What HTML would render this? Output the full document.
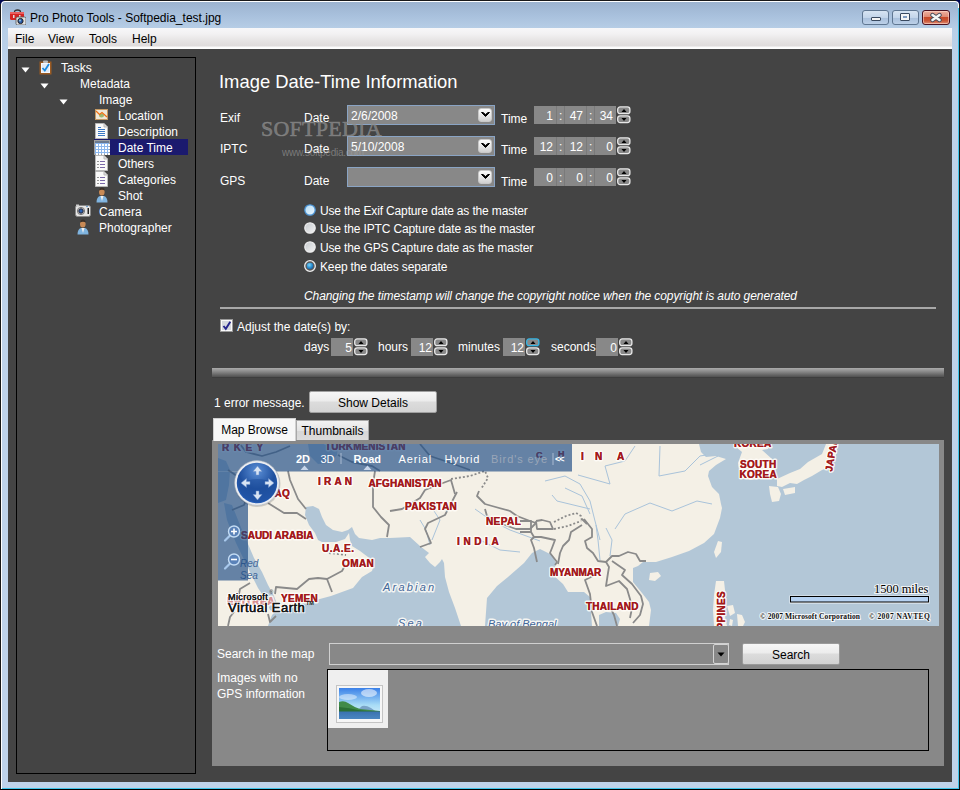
<!DOCTYPE html>
<html><head><meta charset="utf-8">
<style>
*{margin:0;padding:0;box-sizing:border-box}
html,body{width:960px;height:790px;overflow:hidden;background:#000}
body{position:relative;font-family:"Liberation Sans",sans-serif;font-size:12px;color:#fff}
.a{position:absolute}
.t{position:absolute;white-space:nowrap;font-size:12px;line-height:16px}
.k{color:#000}
</style></head><body>
<!-- window frame -->
<div class="a" style="left:0;top:0;width:960px;height:790px;background:#181818"></div><div class="a" style="left:0;top:0;width:4px;height:4px;background:#000850"></div><div class="a" style="left:956px;top:0;width:4px;height:4px;background:#000850"></div>
<div class="a" style="left:1px;top:1px;width:958px;height:788px;background:#fff;border-radius:4px 4px 0 0"></div>
<div class="a" style="left:2px;top:2px;width:956px;height:786px;background:linear-gradient(#9cb3cf 0px,#a9c1dd 14px,#b8cfe7 28px,#bdd2ea 60px,#bfd3ea 790px);border-radius:3px 3px 0 0"></div>
<div class="a" style="left:958px;top:8px;width:1px;height:781px;background:#3fc4ea"></div>
<div class="a" style="left:2px;top:788px;width:957px;height:1px;background:#3fc4ea"></div>
<div class="a" style="left:0;top:789px;width:960px;height:1px;background:#000"></div>

<!-- title -->
<svg class="a" style="left:10px;top:9px" width="16" height="16" viewBox="0 0 16 16">
<path d="M4.5 3 Q4.5 1 7.5 1 Q10.5 1 10.5 3" fill="none" stroke="#333" stroke-width="1.3"/>
<rect x="0" y="3" width="14" height="8" rx="1.5" fill="#d42424"/><rect x="0" y="3" width="14" height="2" fill="#e86060"/>
<rect x="3" y="6" width="1.5" height="3" fill="#ddd"/><rect x="9" y="6" width="1.5" height="3" fill="#ddd"/>
<rect x="6" y="8" width="10" height="8" rx="1.5" fill="#e0e0e0" stroke="#555" stroke-width="0.8"/>
<circle cx="10.5" cy="12" r="2.6" fill="#2a5aa8" stroke="#222" stroke-width="1"/><circle cx="10" cy="11.5" r="0.9" fill="#9cd"/>
</svg>
<div class="t k" style="left:30px;top:10px">Pro Photo Tools - Softpedia_test.jpg</div>

<!-- title buttons -->
<div class="a" style="left:862px;top:10px;width:27px;height:15px;border:1px solid #5f7691;border-radius:3px;background:linear-gradient(#d7e4f2 0,#c3d5ea 50%,#a8bfdb 51%,#bcd0e8 100%)"></div>
<div class="a" style="left:871px;top:17px;width:10px;height:4px;background:#f4f4f4;border:1px solid #3a4a60;border-radius:1px"></div>
<div class="a" style="left:892px;top:10px;width:27px;height:15px;border:1px solid #5f7691;border-radius:3px;background:linear-gradient(#d7e4f2 0,#c3d5ea 50%,#a8bfdb 51%,#bcd0e8 100%)"></div>
<div class="a" style="left:900px;top:13px;width:10px;height:8px;background:#f4f4f4;border:1px solid #3a4a60;border-radius:1px"></div>
<div class="a" style="left:903px;top:16px;width:4px;height:2px;background:#7f9bc0"></div>
<div class="a" style="left:922px;top:10px;width:28px;height:15px;border:1px solid #4a1020;border-radius:3px;background:linear-gradient(#eeb0a0 0,#e08a74 45%,#c84a2a 50%,#c95536 75%,#e09078 100%);box-shadow:inset 0 0 0 1px rgba(255,220,210,0.55)"></div>
<svg class="a" style="left:929px;top:11px" width="14" height="12" viewBox="0 0 14 12"><path d="M3.5 4 L10.5 9 M10.5 4 L3.5 9" stroke="#474a5a" stroke-width="4.4" stroke-linecap="round"/><path d="M3.5 4 L10.5 9 M10.5 4 L3.5 9" stroke="#f4f4f4" stroke-width="2.6" stroke-linecap="round"/></svg>

<!-- menu bar -->
<div class="a" style="left:8px;top:28px;width:944px;height:21px;background:linear-gradient(#f7f7f9 0,#f2f1f2 6px,#e7e5e5 12px,#dedbdb 18px,#fafafa 19px,#fff 21px)"></div>
<div class="t k" style="left:15px;top:31px">File</div>
<div class="t k" style="left:48px;top:31px">View</div>
<div class="t k" style="left:89px;top:31px">Tools</div>
<div class="t k" style="left:132px;top:31px">Help</div>

<!-- content -->
<div class="a" style="left:8px;top:49px;width:944px;height:733px;background:#444"></div>

<!-- tree panel -->
<div class="a" style="left:16px;top:57px;width:180px;height:717px;border:1px solid #000"></div>

<svg class="a" style="left:21px;top:67px" width="9" height="6"><path d="M0.5 0.5 H8.5 L4.5 5.5Z" fill="#fff"/></svg>
<svg class="a" style="left:39px;top:60px" width="13" height="15" viewBox="0 0 13 15"><rect x="0.5" y="1.5" width="12" height="13" fill="#9a5a22"/><rect x="2" y="3" width="9" height="10" fill="#f4f8ff"/><path d="M3 5 H10 M3 7 H10 M3 9 H10 M3 11 H10" stroke="#c8d4e4" stroke-width="0.8"/><rect x="4" y="0.5" width="5" height="2.5" rx="1" fill="#bbb"/><path d="M3.5 8 L5.8 10.5 L10 4" fill="none" stroke="#1a8ae0" stroke-width="1.8"/></svg>
<div class="t" style="left:61px;top:60px">Tasks</div>
<svg class="a" style="left:40px;top:83px" width="9" height="6"><path d="M0.5 0.5 H8.5 L4.5 5.5Z" fill="#fff"/></svg>
<div class="t" style="left:80px;top:76px">Metadata</div>
<svg class="a" style="left:59px;top:99px" width="9" height="6"><path d="M0.5 0.5 H8.5 L4.5 5.5Z" fill="#fff"/></svg>
<div class="t" style="left:99px;top:92px">Image</div>
<svg class="a" style="left:95px;top:109px" width="13" height="11" viewBox="0 0 13 11"><rect x="0.5" y="0.5" width="12" height="10" fill="#efe8d8" stroke="#c49a64"/><ellipse cx="6.5" cy="6.5" rx="2.5" ry="2" fill="#9cb870"/><path d="M1 2 L4.5 5.5 L7 3.5 L12 8" fill="none" stroke="#f07010" stroke-width="1.2"/></svg>
<div class="t" style="left:118px;top:108px">Location</div>
<svg class="a" style="left:95px;top:123px" width="13" height="16" viewBox="0 0 13 16"><path d="M0.5 0.5 H9 L12.5 4 V15.5 H0.5Z" fill="#fafafa" stroke="#b8b8b8"/><path d="M9 0.5 V4 H12.5" fill="#ddd" stroke="#bbb"/><path d="M3 4.5 H6 M3 6.5 H10 M3 8.5 H10 M3 10.5 H10 M3 12.5 H10" stroke="#3b78c4" stroke-width="1"/></svg>
<div class="t" style="left:118px;top:124px">Description</div>
<div class="a" style="left:94px;top:139px;width:94px;height:16px;background:#1b1a6e"></div>
<svg class="a" style="left:94px;top:140px" width="16" height="15" viewBox="0 0 16 15"><rect x="0" y="0" width="16" height="15" fill="#a0a0a0"/><rect x="1" y="1" width="14" height="2" fill="#6a7a90"/><rect x="1" y="3" width="14" height="11" fill="#8cb8ee"/><g fill="#fff"><rect x="2" y="4" width="2" height="2"/><rect x="5" y="4" width="2" height="2"/><rect x="8" y="4" width="2" height="2"/><rect x="11" y="4" width="2" height="2"/><rect x="14" y="4" width="2" height="2"/><rect x="2" y="7" width="2" height="2"/><rect x="5" y="7" width="2" height="2"/><rect x="8" y="7" width="2" height="2"/><rect x="11" y="7" width="2" height="2"/><rect x="14" y="7" width="2" height="2"/><rect x="2" y="10" width="2" height="2"/><rect x="5" y="10" width="2" height="2"/><rect x="8" y="10" width="2" height="2"/><rect x="11" y="10" width="2" height="2"/><rect x="14" y="10" width="2" height="2"/><rect x="2" y="13" width="2" height="2"/><rect x="5" y="13" width="2" height="2"/><rect x="8" y="13" width="2" height="2"/><rect x="11" y="13" width="2" height="2"/><rect x="14" y="13" width="2" height="2"/></g></svg>
<div class="t" style="left:118px;top:140px">Date Time</div>
<svg class="a" style="left:95px;top:155px" width="13" height="16" viewBox="0 0 13 16"><path d="M0.5 0.5 H9 L12.5 4 V15.5 H0.5Z" fill="#fafafa" stroke="#b8b8b8"/><path d="M9 0.5 V4 H12.5" fill="#ddd" stroke="#bbb"/><path d="M2.5 6.5 H3.5 M2.5 9.5 H3.5 M2.5 12.5 H3.5" stroke="#333" stroke-width="1"/><path d="M5 6.5 H10 M5 9.5 H10 M5 12.5 H10" stroke="#7a68a8" stroke-width="1"/></svg>
<div class="t" style="left:118px;top:156px">Others</div>
<svg class="a" style="left:95px;top:171px" width="13" height="16" viewBox="0 0 13 16"><path d="M0.5 0.5 H9 L12.5 4 V15.5 H0.5Z" fill="#fafafa" stroke="#b8b8b8"/><path d="M9 0.5 V4 H12.5" fill="#ddd" stroke="#bbb"/><path d="M2.5 6.5 H3.5 M2.5 9.5 H3.5 M2.5 12.5 H3.5" stroke="#333" stroke-width="1"/><path d="M5 6.5 H10 M5 9.5 H10 M5 12.5 H10" stroke="#7a68a8" stroke-width="1"/></svg>
<div class="t" style="left:118px;top:172px">Categories</div>
<svg class="a" style="left:96px;top:187px" width="12" height="16" viewBox="0 0 12 16"><path d="M0.5 15.5 Q0.5 10 4 9 H8 Q11.5 10 11.5 15.5Z" fill="#7fb4e0"/><path d="M4.5 9 L6 14 L7.5 9Z" fill="#f0f0f0"/><ellipse cx="5.8" cy="5" rx="2.8" ry="3.6" fill="#c98a55"/><path d="M3 3.5 Q3.5 0.5 6 0.5 Q8.5 0.5 8.8 3.5 Q6 2 3 3.5Z" fill="#3a3028"/></svg>
<div class="t" style="left:118px;top:188px">Shot</div>
<svg class="a" style="left:75px;top:204px" width="16" height="13" viewBox="0 0 16 13"><rect x="0.5" y="1.5" width="15" height="11" rx="2" fill="#e6e6e6" stroke="#888"/><rect x="1" y="0.5" width="3" height="2" fill="#ccc"/><circle cx="6" cy="7" r="3.6" fill="#d0d0d0" stroke="#777"/><circle cx="6" cy="7" r="2.2" fill="#2d62b0" stroke="#223"/><rect x="12.5" y="4" width="1.5" height="6" fill="#222"/><circle cx="12" cy="2.5" r="0.8" fill="#48c"/></svg>
<div class="t" style="left:99px;top:204px">Camera</div>
<svg class="a" style="left:77px;top:219px" width="12" height="16" viewBox="0 0 12 16"><path d="M0.5 15.5 Q0.5 10 4 9 H8 Q11.5 10 11.5 15.5Z" fill="#7fb4e0"/><path d="M4.5 9 L6 14 L7.5 9Z" fill="#f0f0f0"/><ellipse cx="5.8" cy="5" rx="2.8" ry="3.6" fill="#c98a55"/><path d="M3 3.5 Q3.5 0.5 6 0.5 Q8.5 0.5 8.8 3.5 Q6 2 3 3.5Z" fill="#3a3028"/></svg>
<div class="t" style="left:99px;top:220px">Photographer</div>


<!-- form -->
<!--FORM-->
<svg width="0" height="0" style="position:absolute"><defs>
<linearGradient id="rg" x1="0" y1="0" x2="1" y2="1"><stop offset="0" stop-color="#c4c8cc"/><stop offset="1" stop-color="#f4f4f4"/></linearGradient>
<radialGradient id="rgC" cx="0.4" cy="0.35" r="0.7"><stop offset="0" stop-color="#7cd4f8"/><stop offset="0.6" stop-color="#2a8ed0"/><stop offset="1" stop-color="#1a5a9a"/></radialGradient>
<linearGradient id="rgH" x1="0" y1="0" x2="1" y2="1"><stop offset="0" stop-color="#b4dcf6"/><stop offset="1" stop-color="#eef8fe"/></linearGradient>
</defs></svg>
<div class="t" style="left:219px;top:71px;font-size:18.4px;line-height:22px">Image Date-Time Information</div>
<div class="t" style="left:220px;top:110px">Exif</div>
<div class="t" style="left:304px;top:110px">Date</div>
<div class="a" style="left:347px;top:105px;width:148px;height:20px;background:#888;border:1px solid #8aa4c4"></div>
<div class="a" style="left:478px;top:108px;width:14px;height:14px;border-radius:3px;background:linear-gradient(#fdfdfd,#e4e4e4 60%,#cfcfcf);border:1px solid #c8c8c8"></div>
<svg class="a" style="left:481px;top:112px" width="9" height="6"><path d="M0.5 0.5 L4.5 4.5 L8.5 0.5 L7 0.5 L4.5 2.5 L2 0.5Z" fill="#000" stroke="#000" stroke-width="1"/></svg>
<div class="t" style="left:351px;top:108px">2/6/2008</div>
<div class="t" style="left:501px;top:111px">Time</div>
<div class="a" style="left:534px;top:106px;width:82px;height:18px;background:#888"></div>
<div class="a" style="left:556px;top:106px;width:1px;height:18px;background:#7a7a7a"></div>
<div class="a" style="left:564px;top:106px;width:1px;height:18px;background:#7a7a7a"></div>
<div class="a" style="left:586px;top:106px;width:1px;height:18px;background:#7a7a7a"></div>
<div class="a" style="left:594px;top:106px;width:1px;height:18px;background:#7a7a7a"></div>
<div class="t" style="left:534px;top:108px;width:19px;text-align:right">1</div>
<div class="t" style="left:559px;top:108px">:</div>
<div class="t" style="left:564px;top:108px;width:19px;text-align:right">47</div>
<div class="t" style="left:589px;top:108px">:</div>
<div class="t" style="left:594px;top:108px;width:19px;text-align:right">34</div>
<svg class="a" style="left:617px;top:106px" width="14" height="18" viewBox="0 0 14 18"><rect x="0.7" y="0.9" width="12.2" height="6.8" rx="2.5" fill="#888" stroke="#e8e8e8" stroke-width="1.3"/><rect x="0.7" y="9.8" width="12.2" height="6.8" rx="2.5" fill="#888" stroke="#e8e8e8" stroke-width="1.3"/><path d="M4.5 6 H9.5 L7 3Z" fill="#000"/><path d="M4.5 12 H9.5 L7 15Z" fill="#000"/></svg>
<div class="t" style="left:220px;top:141px">IPTC</div>
<div class="t" style="left:304px;top:141px">Date</div>
<div class="a" style="left:347px;top:136px;width:148px;height:20px;background:#888;border:1px solid #8aa4c4"></div>
<div class="a" style="left:478px;top:139px;width:14px;height:14px;border-radius:3px;background:linear-gradient(#fdfdfd,#e4e4e4 60%,#cfcfcf);border:1px solid #c8c8c8"></div>
<svg class="a" style="left:481px;top:143px" width="9" height="6"><path d="M0.5 0.5 L4.5 4.5 L8.5 0.5 L7 0.5 L4.5 2.5 L2 0.5Z" fill="#000" stroke="#000" stroke-width="1"/></svg>
<div class="t" style="left:351px;top:139px">5/10/2008</div>
<div class="t" style="left:501px;top:142px">Time</div>
<div class="a" style="left:534px;top:137px;width:82px;height:18px;background:#888"></div>
<div class="a" style="left:556px;top:137px;width:1px;height:18px;background:#7a7a7a"></div>
<div class="a" style="left:564px;top:137px;width:1px;height:18px;background:#7a7a7a"></div>
<div class="a" style="left:586px;top:137px;width:1px;height:18px;background:#7a7a7a"></div>
<div class="a" style="left:594px;top:137px;width:1px;height:18px;background:#7a7a7a"></div>
<div class="t" style="left:534px;top:139px;width:19px;text-align:right">12</div>
<div class="t" style="left:559px;top:139px">:</div>
<div class="t" style="left:564px;top:139px;width:19px;text-align:right">12</div>
<div class="t" style="left:589px;top:139px">:</div>
<div class="t" style="left:594px;top:139px;width:19px;text-align:right">0</div>
<svg class="a" style="left:617px;top:137px" width="14" height="18" viewBox="0 0 14 18"><rect x="0.7" y="0.9" width="12.2" height="6.8" rx="2.5" fill="#888" stroke="#e8e8e8" stroke-width="1.3"/><rect x="0.7" y="9.8" width="12.2" height="6.8" rx="2.5" fill="#888" stroke="#e8e8e8" stroke-width="1.3"/><path d="M4.5 6 H9.5 L7 3Z" fill="#000"/><path d="M4.5 12 H9.5 L7 15Z" fill="#000"/></svg>
<div class="t" style="left:220px;top:173px">GPS</div>
<div class="t" style="left:304px;top:173px">Date</div>
<div class="a" style="left:347px;top:167px;width:148px;height:20px;background:#888;border:1px solid #8aa4c4"></div>
<div class="a" style="left:478px;top:170px;width:14px;height:14px;border-radius:3px;background:linear-gradient(#fdfdfd,#e4e4e4 60%,#cfcfcf);border:1px solid #c8c8c8"></div>
<svg class="a" style="left:481px;top:174px" width="9" height="6"><path d="M0.5 0.5 L4.5 4.5 L8.5 0.5 L7 0.5 L4.5 2.5 L2 0.5Z" fill="#000" stroke="#000" stroke-width="1"/></svg>
<div class="t" style="left:351px;top:170px"></div>
<div class="t" style="left:501px;top:174px">Time</div>
<div class="a" style="left:534px;top:168px;width:82px;height:18px;background:#888"></div>
<div class="a" style="left:556px;top:168px;width:1px;height:18px;background:#7a7a7a"></div>
<div class="a" style="left:564px;top:168px;width:1px;height:18px;background:#7a7a7a"></div>
<div class="a" style="left:586px;top:168px;width:1px;height:18px;background:#7a7a7a"></div>
<div class="a" style="left:594px;top:168px;width:1px;height:18px;background:#7a7a7a"></div>
<div class="t" style="left:534px;top:170px;width:19px;text-align:right">0</div>
<div class="t" style="left:559px;top:170px">:</div>
<div class="t" style="left:564px;top:170px;width:19px;text-align:right">0</div>
<div class="t" style="left:589px;top:170px">:</div>
<div class="t" style="left:594px;top:170px;width:19px;text-align:right">0</div>
<svg class="a" style="left:617px;top:168px" width="14" height="18" viewBox="0 0 14 18"><rect x="0.7" y="0.9" width="12.2" height="6.8" rx="2.5" fill="#888" stroke="#e8e8e8" stroke-width="1.3"/><rect x="0.7" y="9.8" width="12.2" height="6.8" rx="2.5" fill="#888" stroke="#e8e8e8" stroke-width="1.3"/><path d="M4.5 6 H9.5 L7 3Z" fill="#000"/><path d="M4.5 12 H9.5 L7 15Z" fill="#000"/></svg>
<svg class="a" style="left:304px;top:204px" width="12" height="12"><circle cx="6" cy="6" r="5.2" fill="url(#rgH)" stroke="#4c94d4" stroke-width="1.3"/></svg>
<div class="t" style="left:320px;top:203px;letter-spacing:-0.15px">Use the Exif Capture date as the master</div>
<svg class="a" style="left:304px;top:222px" width="12" height="12"><circle cx="6" cy="6" r="5.2" fill="url(#rg)" stroke="#ececec" stroke-width="1.3"/></svg>
<div class="t" style="left:320px;top:221px;letter-spacing:-0.15px">Use the IPTC Capture date as the master</div>
<svg class="a" style="left:304px;top:241px" width="12" height="12"><circle cx="6" cy="6" r="5.2" fill="url(#rg)" stroke="#ececec" stroke-width="1.3"/></svg>
<div class="t" style="left:320px;top:240px;letter-spacing:-0.15px">Use the GPS Capture date as the master</div>
<svg class="a" style="left:304px;top:260px" width="12" height="12"><circle cx="6" cy="6" r="5.3" fill="#5a5a5a" stroke="#ececec" stroke-width="1.3"/><circle cx="6" cy="6" r="3.3" fill="url(#rgC)"/></svg>
<div class="t" style="left:320px;top:259px;letter-spacing:-0.15px">Keep the dates separate</div>
<div class="t" style="left:304px;top:288px;font-style:italic;letter-spacing:-0.08px">Changing the timestamp will change the copyright notice when the copyright is auto generated</div>
<div class="a" style="left:220px;top:307px;width:716px;height:2px;background:#a8a8a8"></div>
<svg class="a" style="left:220px;top:319px" width="13" height="13" viewBox="0 0 13 13"><rect x="0.5" y="0.5" width="12" height="12" fill="#fafafa" stroke="#9a9a9a"/><rect x="2" y="2" width="9" height="9" fill="#d4d8de"/><path d="M3.5 7 L5.8 9.8 L10.3 2.8" fill="none" stroke="#24248c" stroke-width="1.9"/></svg>
<div class="t" style="left:237px;top:319px">Adjust the date(s) by:</div>
<div class="t" style="left:304px;top:339px">days</div>
<div class="a" style="left:331px;top:338px;width:22px;height:18px;background:#888"></div>
<div class="t" style="left:331px;top:340px;width:21px;text-align:right">5</div>
<svg class="a" style="left:354px;top:338px" width="14" height="18" viewBox="0 0 14 18"><rect x="0.7" y="0.9" width="12.2" height="6.8" rx="2.5" fill="#888" stroke="#e8e8e8" stroke-width="1.3"/><rect x="0.7" y="9.8" width="12.2" height="6.8" rx="2.5" fill="#888" stroke="#e8e8e8" stroke-width="1.3"/><path d="M4.5 6 H9.5 L7 3Z" fill="#000"/><path d="M4.5 12 H9.5 L7 15Z" fill="#000"/></svg>
<div class="t" style="left:378px;top:339px">hours</div>
<div class="a" style="left:411px;top:338px;width:22px;height:18px;background:#888"></div>
<div class="t" style="left:411px;top:340px;width:21px;text-align:right">12</div>
<svg class="a" style="left:434px;top:338px" width="14" height="18" viewBox="0 0 14 18"><rect x="0.7" y="0.9" width="12.2" height="6.8" rx="2.5" fill="#888" stroke="#e8e8e8" stroke-width="1.3"/><rect x="0.7" y="9.8" width="12.2" height="6.8" rx="2.5" fill="#888" stroke="#e8e8e8" stroke-width="1.3"/><path d="M4.5 6 H9.5 L7 3Z" fill="#000"/><path d="M4.5 12 H9.5 L7 15Z" fill="#000"/></svg>
<div class="t" style="left:458px;top:339px">minutes</div>
<div class="a" style="left:503px;top:338px;width:22px;height:18px;background:#888"></div>
<div class="t" style="left:503px;top:340px;width:21px;text-align:right">12</div>
<svg class="a" style="left:526px;top:338px" width="14" height="18" viewBox="0 0 14 18"><rect x="0.7" y="0.9" width="12.2" height="6.8" rx="2.5" fill="#888" stroke="#35b6e6" stroke-width="1.3"/><rect x="0.7" y="9.8" width="12.2" height="6.8" rx="2.5" fill="#888" stroke="#e8e8e8" stroke-width="1.3"/><path d="M4.5 6 H9.5 L7 3Z" fill="#000"/><path d="M4.5 12 H9.5 L7 15Z" fill="#000"/></svg>
<div class="t" style="left:551px;top:339px">seconds</div>
<div class="a" style="left:596px;top:338px;width:22px;height:18px;background:#888"></div>
<div class="t" style="left:596px;top:340px;width:21px;text-align:right">0</div>
<svg class="a" style="left:619px;top:338px" width="14" height="18" viewBox="0 0 14 18"><rect x="0.7" y="0.9" width="12.2" height="6.8" rx="2.5" fill="#888" stroke="#e8e8e8" stroke-width="1.3"/><rect x="0.7" y="9.8" width="12.2" height="6.8" rx="2.5" fill="#888" stroke="#e8e8e8" stroke-width="1.3"/><path d="M4.5 6 H9.5 L7 3Z" fill="#000"/><path d="M4.5 12 H9.5 L7 15Z" fill="#000"/></svg>
<div class="a" style="left:212px;top:368px;width:732px;height:9px;background:linear-gradient(#ababab,#8e8e8e 35%,#626262 80%,#505050)"></div><div class="a" style="left:212px;top:377px;width:732px;height:1px;background:#3d3d3d"></div>
<div class="t" style="left:261px;top:116px;font-family:'Liberation Serif',serif;font-size:22px;line-height:26px;color:rgba(140,140,140,0.72);letter-spacing:0.25px;-webkit-text-stroke:0.6px rgba(140,140,140,0.72)">SOFTPEDIA</div>
<div class="t" style="left:282px;top:146px;font-size:10px;line-height:13px;color:rgba(160,160,160,0.6);letter-spacing:-0.25px">www.softpedia.com</div>
<div class="t" style="left:214px;top:395px">1 error message.</div>
<div class="a" style="left:309px;top:391px;width:128px;height:22px;border:1px solid #a0a0a0;border-radius:2px;background:linear-gradient(#f6f6f6,#ececec 45%,#dcdcdc 50%,#d4d4d4)"></div>
<div class="t k" style="left:309px;top:395px;width:128px;text-align:center">Show Details</div>
<!--/FORM-->

<!-- map -->
<!--MAP-->
<div class="a" style="left:212px;top:440px;width:732px;height:326px;background:#888"></div>
<svg class="a" style="left:218px;top:444px" width="721" height="182" viewBox="218 444 721 182">
<rect x="218" y="444" width="721" height="182" fill="#b3c7d7"/>
<polygon points="218,444 699,444 701,452 706,457 716,456 726,459 716,465 709,471 708,476 712,487 719,494 721,504 722,508 720,518 714,534 704,543 689,551 672,557 656,562 643,562 638,566 633,568 633,582 642,593 649,602 651,610 650,618 649,626 618,626 620,619 616,613 606,612 599,615 599,626 592,626 590,597 584,592 568,592 563,584 553,575 556,563 552,555 540,549 532,553 524,563 508,577 497,586 487,598 485,626 461,626 455,608 449,592 445,577 444,563 442,559 440,562 435,567 430,563 425,557 429,553 425,550 420,546 410,537 390,538 380,538 372,540 359,538 355,534 352,527 348,530 342,532 333,530 326,525 322,517 319,509 313,506 306,507 305,515 309,525 315,533 318,540 322,542 336,542 345,539 349,533 350,540 352,546 360,551 368,557 374,565 372,571 362,577 353,588 331,596 316,600 303,603 290,609 280,613 275,612 272,615 270,620 268,626 218,626" fill="#f4f0e6"/>
<polygon points="734,444 770,444 768,449 762,450 772,459 774,478 760,479 751,480 740,478 738,463 742,452 736,447" fill="#f4f0e6"/>
<polygon points="777,479 790,473 800,469 808,462 815,458 822,454 826,444 838,444 836,455 830,467 822,470 812,476 804,480 797,484 790,483 782,487 777,486" fill="#f4f0e6"/>
<polygon points="769,486 778,487 781,494 779,501 772,502 770,494" fill="#f4f0e6"/>
<polygon points="783,489 795,487 795,493 785,495" fill="#f4f0e6"/>
<polygon points="718,541 722,542 721,552 716,558 714,552" fill="#f4f0e6"/>
<polygon points="650,573 658,572 661,576 655,581 649,580" fill="#f4f0e6"/>
<polygon points="716,581 724,581 725,590 726,600 724,612 727,626 714,626 713,610 714,595" fill="#f4f0e6"/>
<polygon points="727,606 733,605 735,613 730,616" fill="#f4f0e6"/>
<polygon points="737,614 742,615 745,622 743,626 738,626" fill="#f4f0e6"/>
<polygon points="730,619 733,620 732,626 729,625" fill="#f4f0e6"/>
<polygon points="224,503 232,505 242,530 254,558 262,572 268,585 274,596 277,604 274,612 270,610 266,600 258,588 250,572 236,543 227,520" fill="#b3c7d7"/>
<polygon points="218,458 226,461 230,470 229,485 226,500 218,503" fill="#b3c7d7"/>
<polygon points="308,444 338,444 337,455 330,463 318,464 310,456" fill="#b3c7d7"/>
<polyline points="420,520 426,530 430,545" fill="none" stroke="#a9c3da" stroke-width="1"/>
<polyline points="475,509 492,521 510,530 540,541" fill="none" stroke="#a9c3da" stroke-width="1"/>
<polyline points="545,481 565,476 580,484 590,501 595,521 600,540" fill="none" stroke="#a9c3da" stroke-width="1"/>
<polyline points="565,488 582,496 590,514" fill="none" stroke="#a9c3da" stroke-width="1"/>
<polyline points="552,495 557,501 590,509" fill="none" stroke="#a9c3da" stroke-width="1"/>
<polyline points="615,529 625,514 650,503 672,511 697,501 712,504" fill="none" stroke="#a9c3da" stroke-width="1"/>
<polyline points="635,446 625,461 605,466 610,484 578,475" fill="none" stroke="#a9c3da" stroke-width="1"/>
<polyline points="660,446 659,476 685,471 700,456 706,455" fill="none" stroke="#a9c3da" stroke-width="1"/>
<polyline points="600,560 598,540 596,525" fill="none" stroke="#a9c3da" stroke-width="1"/>
<polyline points="610,556 612,540 606,528" fill="none" stroke="#a9c3da" stroke-width="1"/>
<polyline points="700,465 718,456" fill="none" stroke="#a9c3da" stroke-width="1"/>
<polyline points="480,540 500,550 520,552" fill="none" stroke="#a9c3da" stroke-width="1"/>
<polyline points="430,505 440,520 432,540" fill="none" stroke="#a9c3da" stroke-width="1"/>
<polyline points="520,521 531,521 531,532 520,532" fill="none" stroke="#8a8a8a" stroke-width="1.8" stroke-linejoin="round"/>
<polyline points="536,521 542,520 550,522 553,529 537,529 536,521" fill="none" stroke="#8a8a8a" stroke-width="1.8" stroke-linejoin="round"/>
<polyline points="584,519 592,529 592,537 585,541 587,548 593,553 598,561 606,562 612,556 619,556 628,552 636,554 640,561 646,561" fill="none" stroke="#8a8a8a" stroke-width="1.8" stroke-linejoin="round"/>
<polyline points="582,525 571,532 569,540 563,546 560,553 558,564" fill="none" stroke="#8a8a8a" stroke-width="1.8" stroke-linejoin="round"/>
<polyline points="531,532 534,537 541,537 555,540 552,548 550,553 557,562 555,565" fill="none" stroke="#8a8a8a" stroke-width="1.8" stroke-linejoin="round"/>
<polyline points="534,537 531,540 534,548 537,562" fill="none" stroke="#8a8a8a" stroke-width="1.8" stroke-linejoin="round"/>
<polyline points="595,575 585,580 590,594 592,612 597,626" fill="none" stroke="#8a8a8a" stroke-width="1.8" stroke-linejoin="round"/>
<polyline points="606,562 609,567 608,573 606,586 619,581 627,589 630,599 632,608 630,618" fill="none" stroke="#8a8a8a" stroke-width="1.8" stroke-linejoin="round"/>
<polyline points="612,561 625,570 622,575 632,584 641,596 643,604 640,615 633,623" fill="none" stroke="#8a8a8a" stroke-width="1.8" stroke-linejoin="round"/>
<polyline points="609,605 614,615 617,626" fill="none" stroke="#8a8a8a" stroke-width="1.8" stroke-linejoin="round"/>
<polyline points="240,444 246,452 262,456 276,452 290,446" fill="none" stroke="#8a8a8a" stroke-width="1.8" stroke-linejoin="round"/>
<polyline points="228,470 240,478 250,490 244,505 232,510" fill="none" stroke="#8a8a8a" stroke-width="1.8" stroke-linejoin="round"/>
<polyline points="338,455 352,462 372,466 380,471" fill="none" stroke="#8a8a8a" stroke-width="1.8" stroke-linejoin="round"/>
<polyline points="420,444 430,456 448,462 470,470" fill="none" stroke="#8a8a8a" stroke-width="1.8" stroke-linejoin="round"/>
<polyline points="288,471 290,480 298,499 306,509" fill="none" stroke="#8a8a8a" stroke-width="1.8" stroke-linejoin="round"/>
<polyline points="268,503 284,513 297,513 306,519" fill="none" stroke="#8a8a8a" stroke-width="1.8" stroke-linejoin="round"/>
<polyline points="275,594 276,587 297,589 309,579 318,578 327,579 342,571 346,564" fill="none" stroke="#8a8a8a" stroke-width="1.8" stroke-linejoin="round"/>
<polyline points="327,579 332,592" fill="none" stroke="#8a8a8a" stroke-width="1.8" stroke-linejoin="round"/>
<polyline points="375,471 373,484 373,507 381,517 389,525 387,537" fill="none" stroke="#8a8a8a" stroke-width="1.8" stroke-linejoin="round"/>
<polyline points="390,511 402,509 420,498 425,490 435,486 451,480 455,494" fill="none" stroke="#8a8a8a" stroke-width="1.8" stroke-linejoin="round"/>
<polyline points="457,492 445,515 428,523 425,529 431,543 420,547" fill="none" stroke="#8a8a8a" stroke-width="1.8" stroke-linejoin="round"/>
<polyline points="479,491 477,496 485,504 492,506 510,511 517,516 530,521 536,523" fill="none" stroke="#8a8a8a" stroke-width="1.8" stroke-linejoin="round"/>
<polyline points="485,509 487,516 502,524 516,529 530,529 536,523" fill="none" stroke="#8a8a8a" stroke-width="1.8" stroke-linejoin="round"/>
<polyline points="582,519 587,524" fill="none" stroke="#8a8a8a" stroke-width="1.8" stroke-linejoin="round"/>
<polyline points="250,583 240,589 239,594" fill="none" stroke="#8a8a8a" stroke-width="1.8" stroke-linejoin="round"/>
<polyline points="228,626 230,617 234,612" fill="none" stroke="#8a8a8a" stroke-width="1.8" stroke-linejoin="round"/>
<polyline points="268,614 270,622 276,616" fill="none" stroke="#8a8a8a" stroke-width="1.8" stroke-linejoin="round"/>
<polyline points="451,479 470,476 485,471 488,478 481,489" fill="none" stroke="#8a8a8a" stroke-width="1.8" stroke-dasharray="2 2"/>
<polyline points="554,522 566,516 576,513 581,516 582,521" fill="none" stroke="#8a8a8a" stroke-width="1.8" stroke-dasharray="2 2"/>
<polyline points="554,529 568,526 581,521" fill="none" stroke="#8a8a8a" stroke-width="1.8" stroke-dasharray="2 2"/>
<polyline points="329,553 346,555" fill="none" stroke="#8a8a8a" stroke-width="1.8" stroke-dasharray="2 2"/>
<text x="318" y="485" font-family="Liberation Sans" font-size="10" font-weight="bold" font-style="normal" letter-spacing="3.2" fill="#a3191c" stroke="#fffdf8" stroke-width="3" stroke-opacity="0.85" stroke-linejoin="round" paint-order="stroke">IRAN</text>
<text x="318" y="485" font-family="Liberation Sans" font-size="10" font-weight="bold" font-style="normal" letter-spacing="3.2" fill="#a3191c" stroke="#a3191c" stroke-width="0.15">IRAN</text>
<text x="368.5" y="486.5" font-family="Liberation Sans" font-size="10" font-weight="bold" font-style="normal" letter-spacing="0.1" fill="#a3191c" stroke="#fffdf8" stroke-width="3" stroke-opacity="0.85" stroke-linejoin="round" paint-order="stroke">AFGHANISTAN</text>
<text x="368.5" y="486.5" font-family="Liberation Sans" font-size="10" font-weight="bold" font-style="normal" letter-spacing="0.1" fill="#a3191c" stroke="#a3191c" stroke-width="0.15">AFGHANISTAN</text>
<text x="405" y="509.5" font-family="Liberation Sans" font-size="10" font-weight="bold" font-style="normal" letter-spacing="0.3" fill="#a3191c" stroke="#fffdf8" stroke-width="3" stroke-opacity="0.85" stroke-linejoin="round" paint-order="stroke">PAKISTAN</text>
<text x="405" y="509.5" font-family="Liberation Sans" font-size="10" font-weight="bold" font-style="normal" letter-spacing="0.3" fill="#a3191c" stroke="#a3191c" stroke-width="0.15">PAKISTAN</text>
<text x="264" y="497" font-family="Liberation Sans" font-size="10" font-weight="bold" font-style="normal" letter-spacing="0.3" fill="#a3191c" stroke="#fffdf8" stroke-width="3" stroke-opacity="0.85" stroke-linejoin="round" paint-order="stroke">IRAQ</text>
<text x="264" y="497" font-family="Liberation Sans" font-size="10" font-weight="bold" font-style="normal" letter-spacing="0.3" fill="#a3191c" stroke="#a3191c" stroke-width="0.15">IRAQ</text>
<text x="241" y="539" font-family="Liberation Sans" font-size="10" font-weight="bold" font-style="normal" letter-spacing="0.0" fill="#a3191c" stroke="#fffdf8" stroke-width="3" stroke-opacity="0.85" stroke-linejoin="round" paint-order="stroke">SAUDI ARABIA</text>
<text x="241" y="539" font-family="Liberation Sans" font-size="10" font-weight="bold" font-style="normal" letter-spacing="0.0" fill="#a3191c" stroke="#a3191c" stroke-width="0.15">SAUDI ARABIA</text>
<text x="322" y="551.5" font-family="Liberation Sans" font-size="10" font-weight="bold" font-style="normal" letter-spacing="0.5" fill="#a3191c" stroke="#fffdf8" stroke-width="3" stroke-opacity="0.85" stroke-linejoin="round" paint-order="stroke">U.A.E.</text>
<text x="322" y="551.5" font-family="Liberation Sans" font-size="10" font-weight="bold" font-style="normal" letter-spacing="0.5" fill="#a3191c" stroke="#a3191c" stroke-width="0.15">U.A.E.</text>
<text x="342" y="567" font-family="Liberation Sans" font-size="10" font-weight="bold" font-style="normal" letter-spacing="0.4" fill="#a3191c" stroke="#fffdf8" stroke-width="3" stroke-opacity="0.85" stroke-linejoin="round" paint-order="stroke">OMAN</text>
<text x="342" y="567" font-family="Liberation Sans" font-size="10" font-weight="bold" font-style="normal" letter-spacing="0.4" fill="#a3191c" stroke="#a3191c" stroke-width="0.15">OMAN</text>
<text x="281" y="601.5" font-family="Liberation Sans" font-size="10" font-weight="bold" font-style="normal" letter-spacing="0.3" fill="#a3191c" stroke="#fffdf8" stroke-width="3" stroke-opacity="0.85" stroke-linejoin="round" paint-order="stroke">YEMEN</text>
<text x="281" y="601.5" font-family="Liberation Sans" font-size="10" font-weight="bold" font-style="normal" letter-spacing="0.3" fill="#a3191c" stroke="#a3191c" stroke-width="0.15">YEMEN</text>
<text x="227" y="605" font-family="Liberation Sans" font-size="10" font-weight="bold" font-style="normal" letter-spacing="0.6" fill="#d89090" stroke="#fffdf8" stroke-width="3" stroke-opacity="0.85" stroke-linejoin="round" paint-order="stroke">ERITREA</text>
<text x="227" y="605" font-family="Liberation Sans" font-size="10" font-weight="bold" font-style="normal" letter-spacing="0.6" fill="#d89090" stroke="#d89090" stroke-width="0.15">ERITREA</text>
<text x="457" y="544.5" font-family="Liberation Sans" font-size="10" font-weight="bold" font-style="normal" letter-spacing="3.6" fill="#a3191c" stroke="#fffdf8" stroke-width="3" stroke-opacity="0.85" stroke-linejoin="round" paint-order="stroke">INDIA</text>
<text x="457" y="544.5" font-family="Liberation Sans" font-size="10" font-weight="bold" font-style="normal" letter-spacing="3.6" fill="#a3191c" stroke="#a3191c" stroke-width="0.15">INDIA</text>
<text x="486" y="524.5" font-family="Liberation Sans" font-size="10" font-weight="bold" font-style="normal" letter-spacing="0.4" fill="#a3191c" stroke="#fffdf8" stroke-width="3" stroke-opacity="0.85" stroke-linejoin="round" paint-order="stroke">NEPAL</text>
<text x="486" y="524.5" font-family="Liberation Sans" font-size="10" font-weight="bold" font-style="normal" letter-spacing="0.4" fill="#a3191c" stroke="#a3191c" stroke-width="0.15">NEPAL</text>
<text x="550" y="575.5" font-family="Liberation Sans" font-size="10" font-weight="bold" font-style="normal" letter-spacing="0.0" fill="#a3191c" stroke="#fffdf8" stroke-width="3" stroke-opacity="0.85" stroke-linejoin="round" paint-order="stroke">MYANMAR</text>
<text x="550" y="575.5" font-family="Liberation Sans" font-size="10" font-weight="bold" font-style="normal" letter-spacing="0.0" fill="#a3191c" stroke="#a3191c" stroke-width="0.15">MYANMAR</text>
<text x="586" y="609.5" font-family="Liberation Sans" font-size="10" font-weight="bold" font-style="normal" letter-spacing="0.2" fill="#a3191c" stroke="#fffdf8" stroke-width="3" stroke-opacity="0.85" stroke-linejoin="round" paint-order="stroke">THAILAND</text>
<text x="586" y="609.5" font-family="Liberation Sans" font-size="10" font-weight="bold" font-style="normal" letter-spacing="0.2" fill="#a3191c" stroke="#a3191c" stroke-width="0.15">THAILAND</text>
<text x="740" y="467.5" font-family="Liberation Sans" font-size="10" font-weight="bold" font-style="normal" letter-spacing="0.3" fill="#a3191c" stroke="#fffdf8" stroke-width="3" stroke-opacity="0.85" stroke-linejoin="round" paint-order="stroke">SOUTH</text>
<text x="740" y="467.5" font-family="Liberation Sans" font-size="10" font-weight="bold" font-style="normal" letter-spacing="0.3" fill="#a3191c" stroke="#a3191c" stroke-width="0.15">SOUTH</text>
<text x="739.5" y="478" font-family="Liberation Sans" font-size="10" font-weight="bold" font-style="normal" letter-spacing="0.3" fill="#a3191c" stroke="#fffdf8" stroke-width="3" stroke-opacity="0.85" stroke-linejoin="round" paint-order="stroke">KOREA</text>
<text x="739.5" y="478" font-family="Liberation Sans" font-size="10" font-weight="bold" font-style="normal" letter-spacing="0.3" fill="#a3191c" stroke="#a3191c" stroke-width="0.15">KOREA</text>
<text x="734" y="447" font-family="Liberation Sans" font-size="10" font-weight="bold" font-style="normal" letter-spacing="0.3" fill="#a3191c" stroke="#fffdf8" stroke-width="3" stroke-opacity="0.85" stroke-linejoin="round" paint-order="stroke">KOREA</text>
<text x="734" y="447" font-family="Liberation Sans" font-size="10" font-weight="bold" font-style="normal" letter-spacing="0.3" fill="#a3191c" stroke="#a3191c" stroke-width="0.15">KOREA</text>
<text x="581" y="460" font-family="Liberation Sans" font-size="10" font-weight="bold" font-style="normal" letter-spacing="0" fill="#a3191c" stroke="#fffdf8" stroke-width="3" stroke-opacity="0.85" stroke-linejoin="round" paint-order="stroke">I</text>
<text x="581" y="460" font-family="Liberation Sans" font-size="10" font-weight="bold" font-style="normal" letter-spacing="0" fill="#a3191c" stroke="#a3191c" stroke-width="0.15">I</text>
<text x="595" y="460" font-family="Liberation Sans" font-size="10" font-weight="bold" font-style="normal" letter-spacing="0" fill="#a3191c" stroke="#fffdf8" stroke-width="3" stroke-opacity="0.85" stroke-linejoin="round" paint-order="stroke">N</text>
<text x="595" y="460" font-family="Liberation Sans" font-size="10" font-weight="bold" font-style="normal" letter-spacing="0" fill="#a3191c" stroke="#a3191c" stroke-width="0.15">N</text>
<text x="617" y="460" font-family="Liberation Sans" font-size="10" font-weight="bold" font-style="normal" letter-spacing="0" fill="#a3191c" stroke="#fffdf8" stroke-width="3" stroke-opacity="0.85" stroke-linejoin="round" paint-order="stroke">A</text>
<text x="617" y="460" font-family="Liberation Sans" font-size="10" font-weight="bold" font-style="normal" letter-spacing="0" fill="#a3191c" stroke="#a3191c" stroke-width="0.15">A</text>
<text x="832" y="472" font-family="Liberation Sans" font-size="10" font-weight="bold" font-style="normal" letter-spacing="0.3" fill="#a3191c" stroke="#fffdf8" stroke-width="3" stroke-opacity="0.85" stroke-linejoin="round" paint-order="stroke" transform="rotate(-80 832 472)">JAPAN</text>
<text x="832" y="472" font-family="Liberation Sans" font-size="10" font-weight="bold" font-style="normal" letter-spacing="0.3" fill="#a3191c" stroke="#a3191c" stroke-width="0.15" transform="rotate(-80 832 472)">JAPAN</text>
<text x="724.5" y="656.5" font-family="Liberation Sans" font-size="10" font-weight="bold" font-style="normal" letter-spacing="0.3" fill="#a3191c" stroke="#fffdf8" stroke-width="3" stroke-opacity="0.85" stroke-linejoin="round" paint-order="stroke" transform="rotate(-90 724.5 656.5)">PHILIPPINES</text>
<text x="724.5" y="656.5" font-family="Liberation Sans" font-size="10" font-weight="bold" font-style="normal" letter-spacing="0.3" fill="#a3191c" stroke="#a3191c" stroke-width="0.15" transform="rotate(-90 724.5 656.5)">PHILIPPINES</text>
<text x="222" y="451" font-family="Liberation Sans" font-size="10" font-weight="bold" font-style="normal" letter-spacing="4.5" fill="#a3191c" stroke="#fffdf8" stroke-width="3" stroke-opacity="0.85" stroke-linejoin="round" paint-order="stroke">RKEY</text>
<text x="222" y="451" font-family="Liberation Sans" font-size="10" font-weight="bold" font-style="normal" letter-spacing="4.5" fill="#a3191c" stroke="#a3191c" stroke-width="0.15">RKEY</text>
<text x="325" y="450" font-family="Liberation Sans" font-size="10" font-weight="bold" font-style="normal" letter-spacing="0.1" fill="#a3191c" stroke="#fffdf8" stroke-width="3" stroke-opacity="0.85" stroke-linejoin="round" paint-order="stroke">TURKMENISTAN</text>
<text x="325" y="450" font-family="Liberation Sans" font-size="10" font-weight="bold" font-style="normal" letter-spacing="0.1" fill="#a3191c" stroke="#a3191c" stroke-width="0.15">TURKMENISTAN</text>
<text x="536" y="458" font-family="Liberation Sans" font-size="9" font-weight="bold" font-style="normal" letter-spacing="0" fill="#a3191c" stroke="#fffdf8" stroke-width="3" stroke-opacity="0.85" stroke-linejoin="round" paint-order="stroke">C</text>
<text x="536" y="458" font-family="Liberation Sans" font-size="9" font-weight="bold" font-style="normal" letter-spacing="0" fill="#a3191c" stroke="#a3191c" stroke-width="0.15">C</text>
<text x="558" y="457" font-family="Liberation Sans" font-size="9" font-weight="bold" font-style="normal" letter-spacing="0" fill="#a3191c" stroke="#fffdf8" stroke-width="3" stroke-opacity="0.85" stroke-linejoin="round" paint-order="stroke">H</text>
<text x="558" y="457" font-family="Liberation Sans" font-size="9" font-weight="bold" font-style="normal" letter-spacing="0" fill="#a3191c" stroke="#a3191c" stroke-width="0.15">H</text>
<text x="383" y="591" font-family="Liberation Sans" font-size="11" font-weight="normal" font-style="italic" letter-spacing="2.2" fill="#42679a" stroke="#fffdf8" stroke-width="3" stroke-opacity="0.85" stroke-linejoin="round" paint-order="stroke">Arabian</text>
<text x="398" y="627" font-family="Liberation Sans" font-size="11" font-weight="normal" font-style="italic" letter-spacing="2.2" fill="#42679a" stroke="#fffdf8" stroke-width="3" stroke-opacity="0.85" stroke-linejoin="round" paint-order="stroke">Sea</text>
<text x="488" y="628" font-family="Liberation Sans" font-size="11" font-weight="normal" font-style="italic" letter-spacing="0" fill="#42679a" stroke="#fffdf8" stroke-width="3" stroke-opacity="0.85" stroke-linejoin="round" paint-order="stroke">Bay of Bengal</text>
<text x="240" y="567" font-family="Liberation Sans" font-size="10" font-weight="normal" font-style="italic" letter-spacing="0" fill="#42679a" >Red</text>
<text x="240" y="579" font-family="Liberation Sans" font-size="10" font-weight="normal" font-style="italic" letter-spacing="0" fill="#42679a" >Sea</text>
<rect x="218" y="444" width="354" height="27.5" fill="rgb(32,78,134)" fill-opacity="0.68"/>
<rect x="218" y="471.5" width="30" height="109" fill="rgb(32,78,134)" fill-opacity="0.68"/>
<text x="296" y="463" font-family="Liberation Sans" font-size="11" font-weight="bold" fill="#fff">2D</text>
<text x="320.5" y="463" font-family="Liberation Sans" font-size="11" fill="#fff">3D</text>
<rect x="340.5" y="453" width="1" height="11" fill="#a9bad2"/>
<text x="353.5" y="463" font-family="Liberation Sans" font-size="11" font-weight="bold" fill="#fff">Road</text>
<text x="398.5" y="463" font-family="Liberation Sans" font-size="11" fill="#fff" letter-spacing="0.9">Aerial</text>
<text x="444.5" y="463" font-family="Liberation Sans" font-size="11" fill="#fff" letter-spacing="0.6">Hybrid</text>
<text x="491" y="463" font-family="Liberation Sans" font-size="11" fill="#9aa6b8" letter-spacing="0.9">Bird's eye</text>
<rect x="552.5" y="453" width="1" height="12" fill="#a9bad2"/>
<text x="555" y="462" font-family="Liberation Sans" font-size="9" font-weight="bold" fill="#fff" letter-spacing="-1">&lt;&lt;</text>
<path d="M300.5 470 L304.5 465.5 L308.5 470Z" fill="#c8d6ea"/>
<path d="M363.5 470 L367.5 465.5 L371.5 470Z" fill="#c8d6ea"/>
<defs><radialGradient id="nav" cx="0.5" cy="0.2" r="0.9"><stop offset="0" stop-color="#5b8fd6"/><stop offset="0.5" stop-color="#1f4f9e"/><stop offset="1" stop-color="#2a64c0"/></radialGradient></defs>
<circle cx="257.5" cy="484" r="23" fill="#000" fill-opacity="0.15"/>
<circle cx="257" cy="483" r="22.4" fill="#eceef2" stroke="#a8b0bc" stroke-width="0.6"/>
<circle cx="257" cy="483" r="20.2" fill="url(#nav)"/>
<path d="M239 484 Q257 474 276 484 Q276 500 257.5 502.5 Q239 500 239 484Z" fill="#1d4f9c" fill-opacity="0.55"/>
<g fill="#d8e4f4" stroke="#6a8fc8" stroke-width="0.5">
<path d="M257.5 466 L262 471.5 L259 471.5 L259 475 L256 475 L256 471.5 L253 471.5Z"/>
<path d="M257.5 500 L262 494.5 L259 494.5 L259 491 L256 491 L256 494.5 L253 494.5Z"/>
<path d="M241 483 L246.5 478.5 L246.5 481.5 L250 481.5 L250 484.5 L246.5 484.5 L246.5 487.5Z"/>
<path d="M274 483 L268.5 478.5 L268.5 481.5 L265 481.5 L265 484.5 L268.5 484.5 L268.5 487.5Z"/>
</g>
<line x1="230" y1="535.5" x2="225" y2="540.5" stroke="#a8c8ec" stroke-width="2.2" stroke-linecap="round"/><circle cx="234" cy="531.5" r="5.5" fill="#5a82b8" stroke="#c4dcf4" stroke-width="1.4"/><path d="M231 531.5 H237 M234 528.5 V534.5" stroke="#fff" stroke-width="1.6"/>
<line x1="230" y1="563.5" x2="225" y2="568.5" stroke="#a8c8ec" stroke-width="2.2" stroke-linecap="round"/><circle cx="234" cy="559.5" r="5.5" fill="#5a82b8" stroke="#c4dcf4" stroke-width="1.4"/><path d="M231 559.5 H237" stroke="#fff" stroke-width="1.6"/>
<text x="228" y="599.5" font-family="Liberation Sans" font-size="9" fill="#151515" stroke="#fff" stroke-width="2.2" stroke-opacity="0.75" paint-order="stroke" letter-spacing="0.4">Microsoft</text>
<text x="228" y="599.5" font-family="Liberation Sans" font-size="9" fill="#151515" stroke="#151515" stroke-width="0.25" letter-spacing="0.4">Microsoft</text>
<text x="269.5" y="594" font-family="Liberation Sans" font-size="5" fill="#222">®</text>
<text x="228" y="611.5" font-family="Liberation Sans" font-size="13" fill="#151515" stroke="#fff" stroke-width="2.4" stroke-opacity="0.75" paint-order="stroke" letter-spacing="0.45">Virtual Earth</text>
<text x="228" y="611.5" font-family="Liberation Sans" font-size="13" fill="#151515" stroke="#151515" stroke-width="0.35" letter-spacing="0.45">Virtual Earth</text>
<text x="306" y="604.5" font-family="Liberation Sans" font-size="5.5" font-weight="bold" fill="#222">TM</text>
<text x="874" y="593" font-family="Liberation Serif" font-size="12.5" fill="#000" stroke="#fff" stroke-width="2" stroke-opacity="0.8" paint-order="stroke" letter-spacing="-0.1">1500 miles</text>
<rect x="789.5" y="595.5" width="140" height="8" fill="#fff" fill-opacity="0.8"/><rect x="790.5" y="596.5" width="138" height="5.5" fill="#b6d2f2" stroke="#000" stroke-width="1"/>
<text x="760" y="619" font-family="Liberation Serif" font-size="7.5" font-weight="bold" fill="#111" stroke="#fff" stroke-width="2" stroke-opacity="0.85" paint-order="stroke" letter-spacing="0.1">© 2007 Microsoft Corporation</text>
<text x="869" y="619" font-family="Liberation Serif" font-size="7.5" font-weight="bold" fill="#111" stroke="#fff" stroke-width="2" stroke-opacity="0.85" paint-order="stroke" letter-spacing="0.45">© 2007 NAVTEQ</text>
</svg>
<div class="a" style="left:213px;top:418px;width:83px;height:23px;background:#f7f7f7;border:1px solid #d0d0d0;border-bottom:none"></div>
<div class="t k" style="left:213px;top:422px;width:83px;text-align:center">Map Browse</div>
<div class="a" style="left:296px;top:420px;width:73px;height:20px;background:linear-gradient(#f2f2f2,#e4e4e4 50%,#d6d6d6 51%,#dcdcdc);border:1px solid #a8a8a8;border-bottom:none"></div>
<div class="t k" style="left:296px;top:423px;width:73px;text-align:center">Thumbnails</div>
<div class="t" style="left:217px;top:646px">Search in the map</div>
<div class="a" style="left:329px;top:643px;width:400px;height:22px;border:1px solid #d0d0d0;background:#888"></div>
<div class="a" style="left:713px;top:644px;width:16px;height:20px;background:#888;border:1px solid #d4d4d4;border-radius:2px"></div>
<svg class="a" style="left:717px;top:652px" width="8" height="5"><path d="M0.5 0.5 H7.5 L4 4.5Z" fill="#000"/></svg>
<div class="a" style="left:742px;top:643px;width:98px;height:22px;border:1px solid #9a9a9a;border-radius:2px;background:linear-gradient(#f6f6f6,#ececec 45%,#dcdcdc 50%,#d2d2d2)"></div>
<div class="t k" style="left:742px;top:647px;width:98px;text-align:center">Search</div>
<div class="t" style="left:217px;top:670px">Images with no</div>
<div class="t" style="left:217px;top:686px">GPS information</div>
<div class="a" style="left:327px;top:669px;width:602px;height:82px;border:1px solid #000"></div>
<div class="a" style="left:328px;top:670px;width:60px;height:58px;background:#efefef"></div>
<svg class="a" style="left:336px;top:685px" width="47" height="38" viewBox="0 0 47 38"><defs><linearGradient id="sky" x1="0" y1="0" x2="0" y2="1"><stop offset="0" stop-color="#3a80e8"/><stop offset="0.55" stop-color="#a8dcf6"/><stop offset="1" stop-color="#e0f4fa"/></linearGradient><linearGradient id="sea" x1="0" y1="0" x2="0" y2="1"><stop offset="0" stop-color="#3a72b0"/><stop offset="1" stop-color="#4a86c0"/></linearGradient><filter id="bl"><feGaussianBlur stdDeviation="0.6"/></filter></defs>
<rect x="0.5" y="0.5" width="46" height="37" fill="#f6f6f6" stroke="#c4c4c4"/><rect x="3" y="3" width="41" height="31" fill="url(#sky)"/>
<g filter="url(#bl)"><ellipse cx="33" cy="8" rx="8" ry="4" fill="#fff" fill-opacity="0.55"/><ellipse cx="12" cy="12" rx="9" ry="3" fill="#fff" fill-opacity="0.45"/>
<path d="M20 26.5 L26 21 Q30 20 35 23 L40 26.5Z" fill="#7aa4c8"/>
<path d="M3 17 Q8 15 12 18 Q18 22 24 24 Q34 25 44 26 V27 H3Z" fill="#3f8a4a"/><path d="M3 22 Q14 23 22 25 Q32 26 44 26.5 V27 H3Z" fill="#2a6e36"/></g>
<rect x="3" y="26.5" width="41" height="7.5" fill="url(#sea)"/></svg>
<!--/MAP-->

</body></html>
